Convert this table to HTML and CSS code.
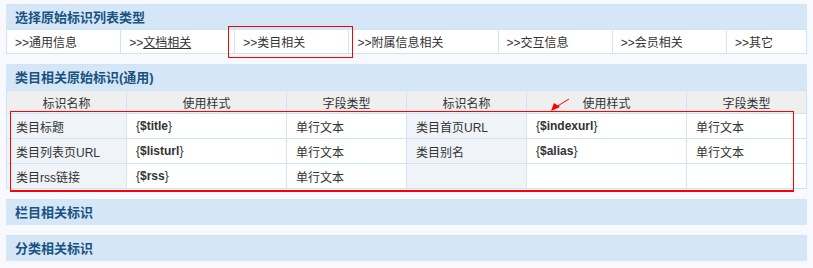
FILE: index.html
```html
<!DOCTYPE html>
<html lang="zh-CN">
<head>
<meta charset="utf-8">
<title>标识列表</title>
<link rel="stylesheet" href="styles.css">
</head>
<body>
<div class="page">
  <div class="box">
    <div class="box-title box-title-short">选择原始标识列表类型</div>
    <table class="tabs">
      <colgroup>
        <col class="t-std"><col class="t-std"><col class="t-std"><col class="t-wide">
        <col class="t-std"><col class="t-std"><col class="t-last">
      </colgroup>
      <tr>
        <td>&gt;&gt;通用信息</td>
        <td>&gt;&gt;<u>文档相关</u></td>
        <td>&gt;&gt;类目相关</td>
        <td>&gt;&gt;附属信息相关</td>
        <td>&gt;&gt;交互信息</td>
        <td>&gt;&gt;会员相关</td>
        <td>&gt;&gt;其它</td>
      </tr>
    </table>
  </div>

  <div class="box">
    <div class="box-title">类目相关原始标识(通用)</div>
    <table class="tags">
      <colgroup>
        <col class="c-name"><col class="c-code"><col class="c-type">
        <col class="c-name"><col class="c-code"><col class="c-type">
      </colgroup>
      <tr class="head">
        <th>标识名称</th><th>使用样式</th><th>字段类型</th>
        <th>标识名称</th><th>使用样式</th><th>字段类型</th>
      </tr>
      <tr>
        <td class="label">类目标题</td><td>{<b>$title</b>}</td><td>单行文本</td>
        <td class="label">类目首页URL</td><td>{<b>$indexurl</b>}</td><td>单行文本</td>
      </tr>
      <tr>
        <td class="label">类目列表页URL</td><td>{<b>$listurl</b>}</td><td>单行文本</td>
        <td class="label">类目别名</td><td>{<b>$alias</b>}</td><td>单行文本</td>
      </tr>
      <tr>
        <td class="label">类目rss链接</td><td>{<b>$rss</b>}</td><td>单行文本</td>
        <td class="label"></td><td></td><td></td>
      </tr>
    </table>
  </div>

  <div class="box">
    <div class="box-title">栏目相关标识</div>
  </div>

  <div class="box">
    <div class="box-title">分类相关标识</div>
  </div>

  <!-- red markup drawn over the content -->
  <div class="mark mark-tab"></div>
  <div class="mark mark-rows"></div>
  <svg class="arrow" width="20" height="14" viewBox="0 0 20 14">
    <line x1="19" y1="1" x2="6" y2="9" stroke="#ff0000" stroke-width="1"/>
    <polygon points="1,13 4,5 10,9" fill="#ff0000"/>
  </svg>
</div>
</body>
</html>
```

FILE: styles.css
```css
html, body {
  margin: 0;
  padding: 0;
  background: #f8f9ff;
}

body {
  font-family: "Liberation Sans", "Noto Sans CJK SC", sans-serif;
  font-size: 12px;
  color: #333;
}

.page {
  position: relative;
  padding: 4px 6px 0 6px;
  width: 801px;
  display: flex;
  flex-direction: column;
  gap: 10px;
}

.box {
  background: #d5e7f7;
}

.box-title {
  height: 25px;
  line-height: 25px;
  padding-left: 9px;
  font-size: 13px;
  font-weight: bold;
  color: #1a5283;
  border-top: 1px solid #cfe4f5;
}

.box-title-short {
  height: 24px;
  line-height: 25px;
}

table {
  border-collapse: collapse;
  width: 801px;
  table-layout: fixed;
}

.t-std { width: 114px; }
.t-wide { width: 149px; }
.t-last { width: 80px; }

.tabs td {
  background: #fff;
  border: 1px solid #cde5f6;
  height: 23px;
  padding: 0 0 0 8px;
  white-space: nowrap;
}

.tabs u {
  text-decoration: underline;
}

.c-name { width: 120px; }
.c-code { width: 160px; }
.c-type { width: 120px; }

.tags th,
.tags td {
  border: 1px solid #cde5f6;
  height: 24px;
  padding: 0 0 0 9px;
  text-align: left;
  font-weight: normal;
  background: #fff;
  white-space: nowrap;
}

.tags tr.head th {
  height: 22px;
  background: #efefef;
  text-align: center;
  padding: 0;
}

.tags td.label {
  background: #f0f4f8;
}

.tags b {
  font-weight: bold;
}

.mark {
  position: absolute;
  border: 1px solid #ff0000;
  box-sizing: border-box;
}

.mark-tab {
  left: 228px;
  top: 26px;
  width: 125px;
  height: 32px;
}

.mark-rows {
  left: 10px;
  top: 111px;
  width: 784px;
  height: 81px;
  border-bottom-width: 2px;
}

.arrow {
  position: absolute;
  left: 550px;
  top: 98px;
}
```
